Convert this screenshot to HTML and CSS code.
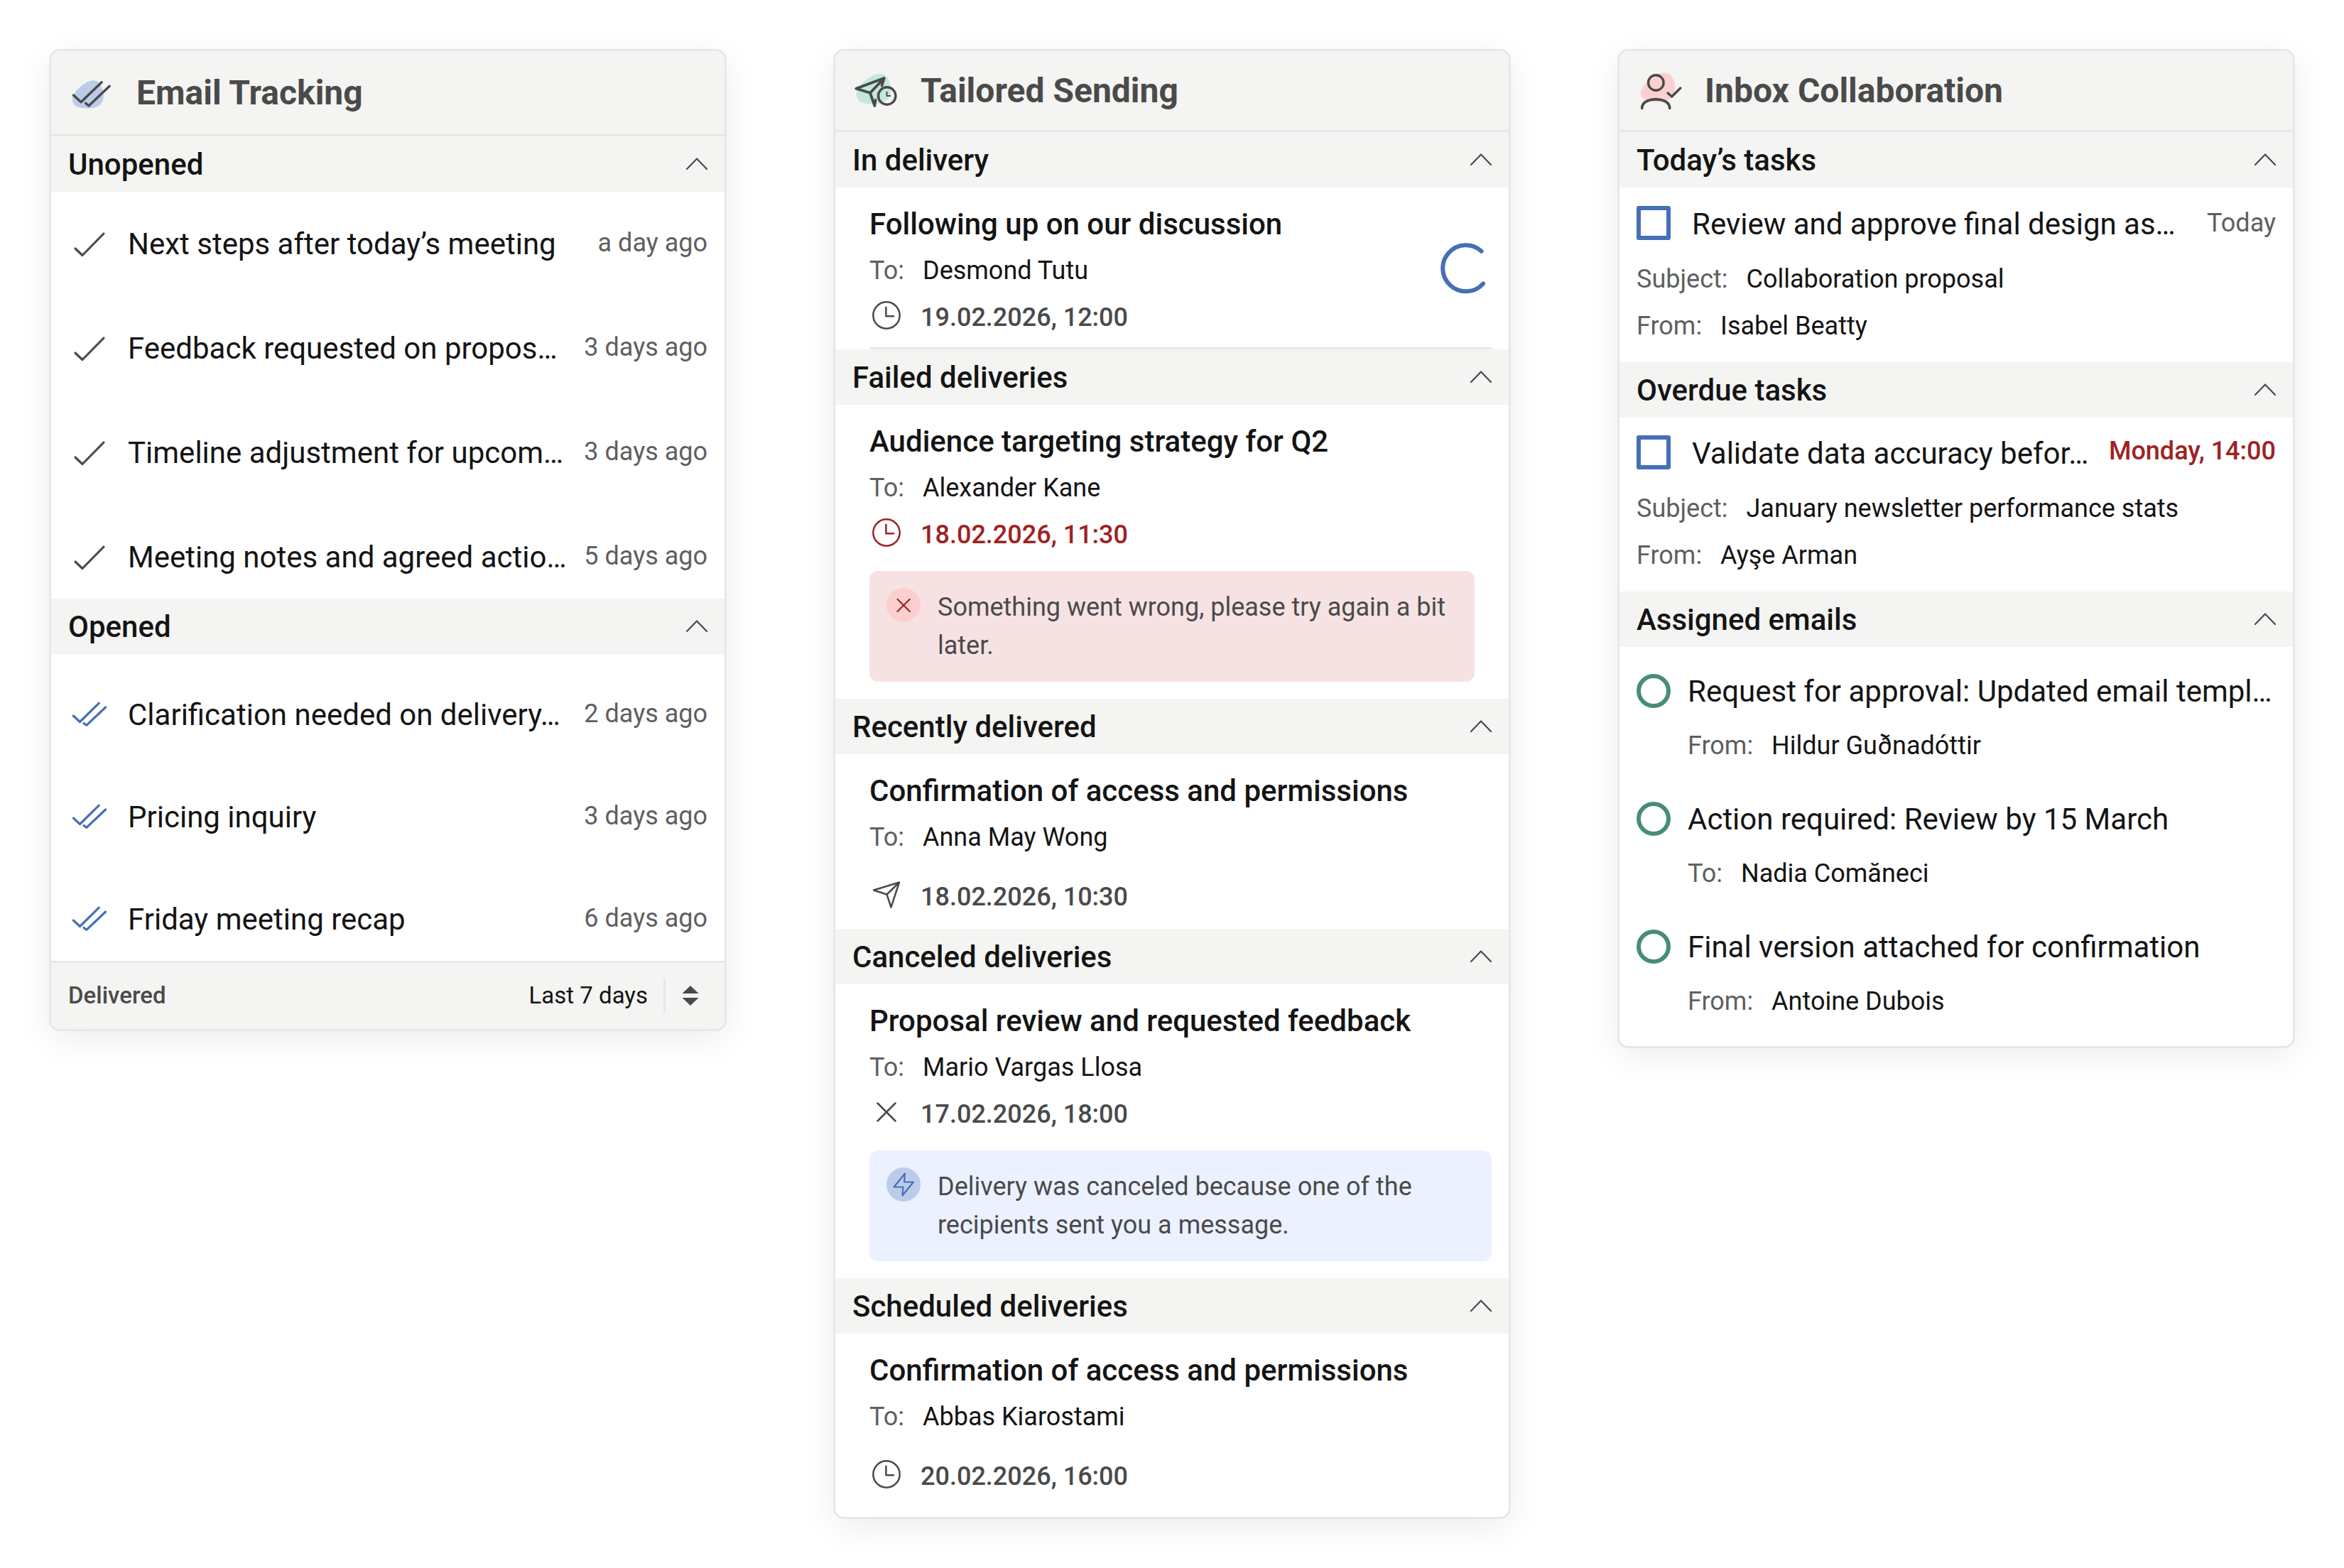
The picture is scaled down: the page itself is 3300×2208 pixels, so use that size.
FILE: index.html
```html
<!DOCTYPE html>
<html lang="en">
<head>
    <meta charset="UTF-8">
    <meta name="viewport" content="width=device-width, initial-scale=1.0">
    <title>Email widgets</title>
    <link rel="stylesheet" href="styles.css">
</head>
<body>
    <!-- Shared icons -->
    <svg class="sprite" xmlns="http://www.w3.org/2000/svg">
        <symbol id="chevron" viewBox="0 0 30 18"><path d="M1 16 L15 1.5 L29 16"/></symbol>
        <symbol id="check" viewBox="0 0 60 60"><path d="M10 36 L20 45.5 L50 15"/></symbol>
        <symbol id="double-check" viewBox="0 0 60 60"><path d="M7.3 31 L16.5 39.5 L43.3 13.2 M22 41.5 L25.8 44.3 L52.6 19"/></symbol>
        <symbol id="clock" viewBox="0 0 48 48"><circle cx="24" cy="24" r="18.7"/><path d="M23.4 12.8 V25.2 H34"/></symbol>
        <symbol id="send" viewBox="0 0 48 48"><path d="M42 6.5 L6 17.5 L24.5 23.5 L30.5 41.5 Z M24.5 23.5 L42 6.5"/></symbol>
        <symbol id="cross" viewBox="0 0 48 48"><path d="M11.5 11.5 L36.5 36.5 M36.5 11.5 L11.5 36.5"/></symbol>
    </svg>

    <main class="board">
        <!-- Email Tracking -->
        <section class="card">
            <header class="card-header tall">
                <svg class="card-icon" viewBox="0 0 72 72">
                    <path class="blob-blue" d="M36 18.2 C44.5 18.2 49.7 29 49.7 40.5 C49.7 51 42.5 57 30 57.5 C14 58 5.7 54.5 5.7 44 C5.7 35 24 18.2 36 18.2 Z"/>
                    <path class="line" d="M7.5 39 L18 48.8 L47.2 20.7 M24.6 50.4 L29 54 L58.2 26.3"/>
                </svg>
                <h2>Email Tracking</h2>
            </header>
            <div class="section-bar"><h3>Unopened</h3><svg class="chevron"><use href="#chevron"/></svg></div>
            <ul class="mail-list unopened">
                <li><svg class="icon-lg"><use href="#check"/></svg><span class="subject">Next steps after today’s meeting</span><span class="time">a day ago</span></li>
                <li><svg class="icon-lg"><use href="#check"/></svg><span class="subject">Feedback requested on propos…</span><span class="time">3 days ago</span></li>
                <li><svg class="icon-lg"><use href="#check"/></svg><span class="subject">Timeline adjustment for upcom…</span><span class="time">3 days ago</span></li>
                <li><svg class="icon-lg"><use href="#check"/></svg><span class="subject">Meeting notes and agreed actio…</span><span class="time">5 days ago</span></li>
            </ul>
            <div class="section-bar"><h3>Opened</h3><svg class="chevron"><use href="#chevron"/></svg></div>
            <ul class="mail-list opened">
                <li><svg class="icon-lg"><use href="#double-check"/></svg><span class="subject">Clarification needed on delivery…</span><span class="time">2 days ago</span></li>
                <li><svg class="icon-lg"><use href="#double-check"/></svg><span class="subject">Pricing inquiry</span><span class="time">3 days ago</span></li>
                <li><svg class="icon-lg"><use href="#double-check"/></svg><span class="subject">Friday meeting recap</span><span class="time">6 days ago</span></li>
            </ul>
            <footer class="card-footer">
                <span class="status">Delivered</span>
                <span class="range">Last 7 days</span>
                <span class="divider"></span>
                <svg class="sort" viewBox="0 0 24 28"><path d="M12 0 L23.5 11 H0.5 Z M12 28 L23.5 17 H0.5 Z"/></svg>
            </footer>
        </section>

        <!-- Tailored Sending -->
        <section class="card">
            <header class="card-header">
                <svg class="card-icon" viewBox="0 0 72 72">
                    <path class="blob-green" d="M39.5 11.8 C48.5 11.8 54 23 54 35.5 C54 48 46 54 32 54.4 C15 55 5.7 51.5 5.7 40 C5.7 30 26 11.8 39.5 11.8 Z"/>
                    <path class="line thick" d="M41.5 28.5 L44.8 18 L5.3 32.8 L25 38.8 L31.3 57 L32.5 49 M25 38.8 L43 20"/>
                    <circle class="line" cx="48.7" cy="43" r="12.2"/>
                    <path class="line thin" d="M48.5 37.8 V43 H53.4"/>
                </svg>
                <h2>Tailored Sending</h2>
            </header>
            <div class="section-bar"><h3>In delivery</h3><svg class="chevron"><use href="#chevron"/></svg></div>
            <article class="delivery in-delivery">
                <div class="delivery-body">
                    <h4>Following up on our discussion</h4>
                    <p class="meta"><span class="label">To:</span>Desmond Tutu</p>
                    <p class="date"><svg class="icon"><use href="#clock"/></svg>19.02.2026, 12:00</p>
                </div>
                <svg class="spinner" viewBox="0 0 72 72"><path d="M57.6 11.8 A32.5 32.5 0 1 0 60 57.4"/></svg>
            </article>
            <div class="section-bar"><h3>Failed deliveries</h3><svg class="chevron"><use href="#chevron"/></svg></div>
            <article class="delivery">
                <h4>Audience targeting strategy for Q2</h4>
                <p class="meta"><span class="label">To:</span>Alexander Kane</p>
                <p class="date failed"><svg class="icon"><use href="#clock"/></svg>18.02.2026, 11:30</p>
                <div class="alert alert-error">
                    <svg class="alert-icon" viewBox="0 0 48 48"><path d="M15.5 15.8 L32.8 33 M32.8 15.8 L15.5 33"/></svg>
                    <p>Something went wrong, please try again a bit<br>later.</p>
                </div>
            </article>
            <div class="section-bar"><h3>Recently delivered</h3><svg class="chevron"><use href="#chevron"/></svg></div>
            <article class="delivery spaced">
                <h4>Confirmation of access and permissions</h4>
                <p class="meta"><span class="label">To:</span>Anna May Wong</p>
                <p class="date"><svg class="icon"><use href="#send"/></svg>18.02.2026, 10:30</p>
            </article>
            <div class="section-bar"><h3>Canceled deliveries</h3><svg class="chevron"><use href="#chevron"/></svg></div>
            <article class="delivery">
                <h4>Proposal review and requested feedback</h4>
                <p class="meta"><span class="label">To:</span>Mario Vargas Llosa</p>
                <p class="date"><svg class="icon"><use href="#cross"/></svg>17.02.2026, 18:00</p>
                <div class="alert alert-info">
                    <svg class="alert-icon" viewBox="0 0 48 48"><path d="M26 8.5 L10.5 27.5 H23.5 L22.5 39.5 L38 20.5 H25 Z"/></svg>
                    <p>Delivery was canceled because one of the<br>recipients sent you a message.</p>
                </div>
            </article>
            <div class="section-bar"><h3>Scheduled deliveries</h3><svg class="chevron"><use href="#chevron"/></svg></div>
            <article class="delivery spaced last">
                <h4>Confirmation of access and permissions</h4>
                <p class="meta"><span class="label">To:</span>Abbas Kiarostami</p>
                <p class="date"><svg class="icon"><use href="#clock"/></svg>20.02.2026, 16:00</p>
            </article>
        </section>

        <!-- Inbox Collaboration -->
        <section class="card">
            <header class="card-header">
                <svg class="card-icon" viewBox="0 0 72 72">
                    <path class="blob-pink" d="M39.5 10.5 C48.5 10.5 54.3 20 54.3 31 C54.3 44 47 51 32 51.6 C15 52 6 48.5 6 38.5 C6 29 26 10.5 39.5 10.5 Z"/>
                    <circle class="line" cx="27.3" cy="24.5" r="10.8"/>
                    <path class="line thick" d="M7.7 60.3 C7.7 52.5 16 47.8 27.2 47.8 S46.7 52.5 46.7 60.3"/>
                    <path class="line" d="M44 39 L49.7 44 L61.8 32"/>
                </svg>
                <h2>Inbox Collaboration</h2>
            </header>
            <div class="section-bar"><h3>Today’s tasks</h3><svg class="chevron"><use href="#chevron"/></svg></div>
            <article class="task">
                <div class="task-row"><span class="checkbox"></span><span class="subject">Review and approve final design as…</span><span class="due">Today</span></div>
                <p class="meta"><span class="label">Subject:</span>Collaboration proposal</p>
                <p class="meta"><span class="label">From:</span>Isabel Beatty</p>
            </article>
            <div class="section-bar"><h3>Overdue tasks</h3><svg class="chevron"><use href="#chevron"/></svg></div>
            <article class="task overdue">
                <div class="task-row"><span class="checkbox"></span><span class="subject">Validate data accuracy befor…</span><span class="due">Monday, 14:00</span></div>
                <p class="meta"><span class="label">Subject:</span>January newsletter performance stats</p>
                <p class="meta"><span class="label">From:</span>Ayşe Arman</p>
            </article>
            <div class="section-bar"><h3>Assigned emails</h3><svg class="chevron"><use href="#chevron"/></svg></div>
            <ul class="assigned">
                <li>
                    <span class="ring"></span>
                    <div>
                        <p class="subject">Request for approval: Updated email templ…</p>
                        <p class="meta"><span class="label">From:</span>Hildur Guðnadóttir</p>
                    </div>
                </li>
                <li>
                    <span class="ring"></span>
                    <div>
                        <p class="subject">Action required: Review by 15 March</p>
                        <p class="meta"><span class="label">To:</span>Nadia Comăneci</p>
                    </div>
                </li>
                <li>
                    <span class="ring"></span>
                    <div>
                        <p class="subject">Final version attached for confirmation</p>
                        <p class="meta"><span class="label">From:</span>Antoine Dubois</p>
                    </div>
                </li>
            </ul>
        </section>
    </main>
</body>
</html>
```
FILE: styles.css
```css
* {
    box-sizing: border-box;
}
body {
    margin: 0;
    background-color: #fff;
    color: #141414;
    font-family: Roboto, "Liberation Sans", sans-serif;
    font-size: 36px;
    line-height: 54px;
}
h2, h3, h4, p, ul {
    margin: 0;
    padding: 0;
}
ul {
    list-style: none;
}
svg {
    display: block;
    flex-shrink: 0;
    fill: none;
    stroke: currentColor;
    stroke-linecap: round;
    stroke-linejoin: round;
}
.sprite {
    display: none;
}
.board {
    display: flex;
    align-items: flex-start;
    gap: 150px;
    padding: 69px;
}

/* Card */
.card {
    width: 954px;
    flex-shrink: 0;
    background-color: #fff;
    border: 3px solid #e7e7e7;
    border-radius: 15px;
    box-shadow: 0 12px 48px rgba(0, 0, 0, 0.07);
    overflow: hidden;
}
.card-header {
    display: flex;
    align-items: center;
    gap: 24px;
    height: 114px;
    padding: 0 24px;
    background-color: #f4f4f2;
    border-bottom: 3px solid #e7e7e7;
    color: #4a4a4a;
}
.card-header.tall {
    height: 120px;
}
.card-header h2 {
    font-size: 48px;
    font-weight: 700;
}
.card-icon {
    width: 72px;
    height: 72px;
}
.line {
    stroke-width: 3.4;
}
.line.thick {
    stroke-width: 3.8;
}
.line.thin {
    stroke-width: 2;
}
.blob-blue {
    fill: #bccce8;
    stroke: none;
}
.blob-green {
    fill: #c2e8da;
    stroke: none;
}
.blob-pink {
    fill: #fbd0d1;
    stroke: none;
}
.section-bar {
    display: flex;
    align-items: center;
    justify-content: space-between;
    height: 78px;
    padding: 0 24px;
    background-color: #f4f4f2;
}
.section-bar h3 {
    padding-top: 2px;
    font-size: 42px;
    font-weight: 500;
}
.chevron {
    width: 30px;
    height: 18px;
    color: #4a4a4a;
    stroke-width: 2.2;
}
.subject {
    font-size: 42px;
    white-space: nowrap;
}

/* Email Tracking */
.mail-list {
    display: flex;
    flex-direction: column;
    padding: 15px 24px 0;
    gap: 30px;
}
.mail-list.opened {
    padding-top: 27px;
    gap: 27px;
}
.mail-list li {
    display: flex;
    align-items: center;
    gap: 24px;
    height: 117px;
}
.icon-lg {
    width: 60px;
    height: 60px;
    color: #4a4a4a;
    stroke-width: 3.2;
}
.opened .icon-lg {
    color: #466fb5;
}
.time {
    margin-left: auto;
    padding-bottom: 4px;
    color: #5f5f5f;
    white-space: nowrap;
}
.card-footer {
    display: flex;
    align-items: center;
    height: 96px;
    padding: 0 36px 2px 24px;
    background-color: #f4f4f2;
    border-top: 3px solid #e7e7e7;
    font-size: 33px;
}
.status {
    color: #4a4a4a;
    font-weight: 500;
}
.range {
    margin-left: auto;
}
.divider {
    width: 3px;
    height: 48px;
    margin: 0 23px 0 22px;
    background-color: #e7e7e7;
}
.sort {
    width: 24px;
    height: 28px;
    fill: #4a4a4a;
    stroke: none;
}

/* Tailored Sending */
.delivery {
    padding: 24px 24px 24px 48px;
}
.delivery.in-delivery {
    display: flex;
    align-items: center;
    justify-content: space-between;
    margin: 0 24px 0 48px;
    padding: 24px 0 15px;
    border-bottom: 3px solid #e7e7e7;
}
.delivery h4 {
    padding-top: 1px;
    font-size: 42px;
    font-weight: 500;
}
.delivery .meta {
    margin-top: 11px;
}
.delivery .date {
    margin-top: 12px;
}
.delivery.spaced {
    padding-bottom: 18px;
}
.delivery.spaced .date {
    margin-top: 30px;
}
.delivery.last {
    padding-bottom: 30px;
}
.label {
    margin-right: 26px;
    color: #5f5f5f;
}
.date {
    display: flex;
    align-items: center;
    gap: 24px;
    color: #4a4a4a;
    font-weight: 500;
}
.date.failed {
    color: #9e2222;
}
.icon {
    width: 48px;
    height: 48px;
    margin-bottom: 6px;
    stroke-width: 2.5;
}
.spinner {
    width: 72px;
    height: 72px;
    margin-bottom: 6px;
    color: #466fb5;
    stroke-width: 6;
}
.alert {
    display: flex;
    align-items: flex-start;
    gap: 24px;
    margin-top: 24px;
    padding: 24px;
    border-radius: 12px;
    color: #4a4a4a;
}
.alert p {
    white-space: nowrap;
}
.alert-icon {
    width: 48px;
    height: 48px;
    border-radius: 50%;
    stroke-width: 2.2;
}
.alert-error {
    margin-right: 24px;
    background-color: #f7e2e3;
}
.alert-error .alert-icon {
    background-color: #fbcfd0;
    color: #9e2222;
}
.alert-info {
    background-color: #ebf1ff;
}
.alert-info .alert-icon {
    background-color: #bccce8;
    color: #466fb5;
}

/* Inbox Collaboration */
.task {
    padding: 24px;
}
.task-row {
    display: flex;
    align-items: center;
    height: 54px;
    margin-bottom: 24px;
}
.task-row .subject {
    padding-top: 2px;
}
.task .meta + .meta {
    margin-top: 12px;
}
.checkbox {
    width: 48px;
    height: 48px;
    margin: 0 30px 2px 0;
    border: 6px solid #466fb5;
    border-radius: 3px;
}
.due {
    margin-left: auto;
    padding-bottom: 2px;
    color: #5f5f5f;
}
.overdue .task-row {
    height: 52.5px;
}
.overdue .due {
    padding-bottom: 6px;
    color: #9e2222;
    font-weight: 500;
}
.assigned {
    display: flex;
    flex-direction: column;
    gap: 49.5px;
    padding: 36px 24px;
}
.assigned li {
    display: flex;
    gap: 24px;
}
.assigned .meta {
    margin-top: 22.5px;
}
.ring {
    width: 48px;
    height: 48px;
    margin-top: 2px;
    border: 6px solid #478d75;
    border-radius: 50%;
}
```
